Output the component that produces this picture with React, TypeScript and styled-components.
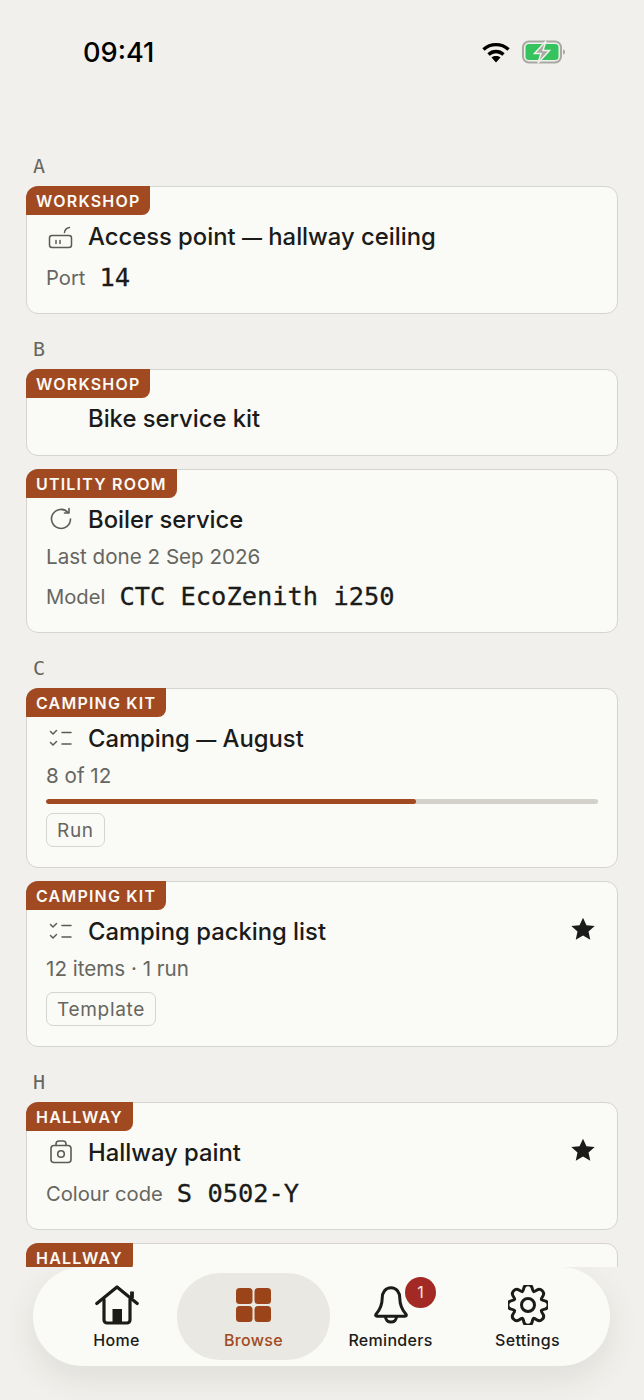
import { ReactNode } from "react";
import styled, { createGlobalStyle } from "styled-components";

const GlobalStyle = createGlobalStyle`
  html, body {
    margin: 0;
    padding: 0;
    background: #f1f0ec;
    font-family: Inter, "Noto Sans", sans-serif;
  }
`;

const Page = styled.div`
  width: 644px;
  height: 1400px;
  display: flex;
  flex-direction: column;
  overflow: hidden;
  background: #f1f0ec;
`;

const StatusBar = styled.div`
  height: 104px;
  flex: none;
  display: flex;
  align-items: center;
  justify-content: space-between;
  padding: 0 78px 0 83px;
  box-sizing: border-box;
`;

const Clock = styled.div`
  font-size: 27.2px;
  font-weight: 500;
  color: #000;
`;

const StatusIcons = styled.div`
  display: flex;
  align-items: center;
  gap: 12px;
`;

const Scroll = styled.div`
  flex: 1;
  min-height: 0;
  overflow: hidden;
  padding: 0 26px;
  display: flex;
  flex-direction: column;
`;

const SectionLetter = styled.div`
  font-family: "DejaVu Sans Mono", monospace;
  font-size: 20px;
  line-height: 24px;
  height: 24px;
  margin: 50px 0 8px 7px;
  color: #66665f;
  & ~ & {
    margin-top: 10px;
  }
`;

const Card = styled.div`
  position: relative;
  flex: none;
  box-sizing: border-box;
  background: #fafaf6;
  border: 1px solid #d5d4ce;
  border-radius: 12px;
  padding: 0 19px 16px;
  margin-bottom: 13px;
`;

const Tag = styled.div`
  width: fit-content;
  box-sizing: border-box;
  margin: -1px 0 0 -20px;
  height: 29px;
  line-height: 30px;
  padding: 0 10px;
  background: #a14a22;
  color: #fafaf6;
  font-size: 16px;
  font-weight: 600;
  letter-spacing: 1.2px;
  border-radius: 12px 0 8px 0;
`;

const TitleRow = styled.div`
  display: flex;
  align-items: center;
  height: 42px;
  &:last-child {
    height: 41px;
  }
`;

const IconSlot = styled.div`
  width: 40px;
  padding-left: 2px;
  flex: none;
  display: flex;
  align-items: center;
  color: #5c5c56;
`;

const Title = styled.div`
  flex: 1;
  font-size: 23.8px;
  font-weight: 550;
  color: #1b1b19;
  white-space: nowrap;
`;

const Dash = styled.span`
  font-size: 20px;
`;

const StarSlot = styled.div`
  display: flex;
  margin: 0 2px 4px 0;
`;

const Subtle = styled.div`
  font-size: 20.6px;
  line-height: 30px;
  color: #66665f;
  margin-top: 2px;
`;

const FieldRow = styled.div`
  display: flex;
  align-items: center;
  gap: 14px;
  height: 40px;
  ${Subtle} + & {
    margin-top: 4px;
  }
`;

const FieldLabel = styled.span`
  font-size: 20.2px;
  color: #66665f;
`;

const FieldValue = styled.span`
  font-family: "DejaVu Sans Mono", monospace;
  font-size: 25.4px;
  color: #1b1b19;
  -webkit-text-stroke: 0.3px #1b1b19;
`;

const Progress = styled.div`
  height: 5px;
  border-radius: 3px;
  background: #d3d2ca;
  margin: 8px 0 1px;
  overflow: hidden;
`;

const ProgressFill = styled.div`
  height: 100%;
  background: #a14a22;
  border-radius: 3px;
`;

const Chip = styled.div`
  width: fit-content;
  margin: 8px 0 4px;
  height: 32px;
  line-height: 33px;
  padding: 0 10px;
  font-size: 19px;
  letter-spacing: 0.7px;
  color: #66665f;
  border: 1px solid #d5d4ce;
  border-radius: 7px;
  ${Progress} + & {
    margin-top: 9px;
  }
`;

const TabArea = styled.div`
  flex: none;
  height: 133px;
  padding: 0 34px 34px 33px;
  box-sizing: border-box;
`;

const TabBar = styled.nav`
  height: 99px;
  box-sizing: border-box;
  border-radius: 50px;
  background: #fafaf6;
  box-shadow: 0 12px 32px rgba(60, 58, 50, 0.1);
  display: grid;
  grid-template-columns: repeat(4, 137px);
  padding: 0 15px;
`;

const Tab = styled.div<{ $active?: boolean }>`
  position: relative;
  display: flex;
  flex-direction: column;
  align-items: center;
  gap: 5px;
  margin: 6px ${({ $active }) => ($active ? "-8px" : "0")};
  padding-top: 12px;
  border-radius: 43px;
  background: ${({ $active }) => ($active ? "#e9e8e3" : "transparent")};
  color: ${({ $active }) => ($active ? "#a14a22" : "#1b1b19")};
`;

const TabIcon = styled.div`
  height: 40px;
  display: flex;
  align-items: center;
  justify-content: center;
`;

const TabLabel = styled.span`
  font-size: 16px;
  font-weight: 450;
  letter-spacing: 0.3px;
  line-height: 20px;
`;

const Badge = styled.span`
  position: absolute;
  top: 4px;
  left: 83px;
  width: 31px;
  height: 31px;
  border-radius: 50%;
  background: #a32a24;
  color: #fbe9e4;
  font-size: 16px;
  line-height: 30px;
  text-align: center;
`;

const StarIcon = () => (
  <svg width="26" height="26" viewBox="0 0 24 24" fill="#1b1b19">
    <path d="M12 1.500l3.200 7 7.600.8-5.700 5.100 1.600 7.500L12 18.100l-6.700 3.800 1.600-7.500L1.200 9.300l7.600-.8z" />
  </svg>
);

const RouterIcon = () => (
  <svg width="26" height="26" viewBox="0 0 26 26" fill="none" stroke="currentColor" strokeWidth="1.500" strokeLinecap="round">
    <rect x="1.500" y="12.500" width="22" height="12" rx="2.500" />
    <path d="M8 17.500v3M12 17.500v3" />
    <path d="M16.500 9.500c.3-3 2-4.500 5-5" />
  </svg>
);

const RefreshIcon = () => (
  <svg width="26" height="26" viewBox="0 0 26 26" fill="none" stroke="currentColor" strokeWidth="1.600" strokeLinecap="round" strokeLinejoin="round">
    <path d="M20 6.500A9.500 9.500 0 1 0 22.500 13" />
    <path d="M21 2.500v4.500h-4.500" />
  </svg>
);

const ChecklistIcon = () => (
  <svg width="26" height="26" viewBox="0 0 26 26" fill="none" stroke="currentColor" strokeWidth="1.500" strokeLinecap="round" strokeLinejoin="round">
    <path d="M2.500 6.500l2.500 2.500L8.500 5.500M2.500 17.500l2.500 2.500L8.500 16.500" />
    <path d="M14 7.500h9M14 19h9" />
  </svg>
);

const PaintIcon = () => (
  <svg width="26" height="26" viewBox="0 0 26 26" fill="none" stroke="currentColor" strokeWidth="1.600" strokeLinecap="round">
    <rect x="3" y="6.500" width="20" height="17" rx="3" />
    <path d="M8 6.500V5a3 3 0 0 1 3-3h4a3 3 0 0 1 3 3v1.500" />
    <circle cx="13" cy="15" r="3.300" />
  </svg>
);

const WifiIcon = () => (
  <svg width="28" height="22" viewBox="0 0 28 22" fill="none" stroke="#000" strokeWidth="3.400">
    <path d="M1.500 8.500c7-6.500 18-6.500 25 0" />
    <path d="M6.500 13.500c4.500-4 10.500-4 15 0" />
    <path d="M14 21.500l-4.500-5c2.700-1.900 6.300-1.900 9 0z" fill="#000" stroke="none" />
  </svg>
);

const BatteryIcon = () => (
  <svg width="44" height="24" viewBox="0 0 44 24">
    <rect x="1" y="1.500" width="38" height="21" rx="6" fill="none" stroke="#a9a9a3" strokeWidth="2" />
    <rect x="3.500" y="4" width="33" height="16" rx="3.500" fill="#34c35c" />
    <path d="M41 9.500c1.500.3 2 1.200 2 2.500s-.5 2.200-2 2.500z" fill="#a9a9a3" />
    <path d="M24 1L12.500 13.500h6.500L16 23l11.500-12.500H21z" fill="#a9a9a3" stroke="#f1f0ec" strokeWidth="1.500" />
  </svg>
);

const HomeIcon = () => (
  <svg width="44" height="40" viewBox="0 0 44 40" fill="none" stroke="#1b1b19" strokeWidth="3.200" strokeLinecap="round" strokeLinejoin="round">
    <path d="M1.800 18.500L22 2l20.200 16.500" />
    <path d="M9 14.500v20.500a3 3 0 0 0 3 3h20a3 3 0 0 0 3-3V14.500" />
    <path d="M37 13V6.500" strokeWidth="3.800" strokeLinecap="butt" />
    <rect x="17.500" y="24" width="9.500" height="14" fill="#1b1b19" stroke="none" />
  </svg>
);

const GridIcon = () => (
  <svg width="35" height="34" viewBox="0 0 35 34" fill="#9c4419">
    <rect width="16.500" height="16" rx="3.500" />
    <rect x="18.500" width="16.500" height="16" rx="3.500" />
    <rect y="18" width="16.500" height="16" rx="3.500" />
    <rect x="18.500" y="18" width="16.500" height="16" rx="3.500" />
  </svg>
);

const BellIcon = () => (
  <svg width="36" height="38" viewBox="0 0 36 38" fill="none" stroke="#1b1b19" strokeWidth="3" strokeLinecap="round" strokeLinejoin="round">
    <path d="M18 1.800c-5.500 0-8.800 4.500-8.800 10.500 0 7-2.200 11.500-6.200 16-.8 1-.3 2 1 2h28c1.300 0 1.800-1 1-2-4-4.500-6.200-9-6.200-16 0-6-3.300-10.500-8.800-10.500z" />
    <path d="M12.500 30.500c0 3.500 2.300 5.500 5.500 5.500s5.500-2 5.500-5.500" />
  </svg>
);

// eight rounded teeth, smoothed through the midpoints of the outline
const gearPath = (() => {
  const center = 20;
  const pts: [number, number][] = [];
  for (let i = 0; i < 8; i++) {
    const a = (i * Math.PI) / 4 - Math.PI / 2;
    const ring: [number, number][] = [
      [14.5, a - 0.34],
      [20.5, a - 0.17],
      [20.5, a + 0.17],
      [14.5, a + 0.34],
    ];
    ring.forEach(([r, t]) => pts.push([center + r * Math.cos(t), center + r * Math.sin(t)]));
  }
  const mid = (p: [number, number], q: [number, number]) => `${(p[0] + q[0]) / 2} ${(p[1] + q[1]) / 2}`;
  let d = `M${mid(pts[pts.length - 1], pts[0])}`;
  pts.forEach((p, i) => {
    d += `Q${p[0]} ${p[1]} ${mid(p, pts[(i + 1) % pts.length])}`;
  });
  return `${d}Z`;
})();

const GearIcon = () => (
  <svg width="40" height="40" viewBox="0 0 40 40" fill="none" stroke="#1b1b19" strokeWidth="3" strokeLinejoin="round">
    <path d={gearPath} />
    <circle cx="20" cy="20" r="6.500" />
  </svg>
);

type ItemProps = {
  tag: string;
  icon?: ReactNode;
  title: ReactNode;
  starred?: boolean;
  children?: ReactNode;
};

function Item({ tag, icon, title, starred, children }: ItemProps) {
  return (
    <Card>
      <Tag>{tag}</Tag>
      <TitleRow>
        <IconSlot>{icon}</IconSlot>
        <Title>{title}</Title>
        {starred && (
          <StarSlot>
            <StarIcon />
          </StarSlot>
        )}
      </TitleRow>
      {children}
    </Card>
  );
}

export default function App() {
  return (
    <Page>
      <GlobalStyle />
      <StatusBar>
        <Clock>09:41</Clock>
        <StatusIcons>
          <WifiIcon />
          <BatteryIcon />
        </StatusIcons>
      </StatusBar>
      <Scroll>
        <SectionLetter>A</SectionLetter>
        <Item
          tag="WORKSHOP"
          icon={<RouterIcon />}
          title={
            <>
              Access point <Dash>—</Dash> hallway ceiling
            </>
          }
        >
          <FieldRow>
            <FieldLabel>Port</FieldLabel>
            <FieldValue>14</FieldValue>
          </FieldRow>
        </Item>
        <SectionLetter>B</SectionLetter>
        <Item tag="WORKSHOP" title="Bike service kit" />
        <Item tag="UTILITY ROOM" icon={<RefreshIcon />} title="Boiler service">
          <Subtle>Last done 2 Sep 2026</Subtle>
          <FieldRow>
            <FieldLabel>Model</FieldLabel>
            <FieldValue>CTC EcoZenith i250</FieldValue>
          </FieldRow>
        </Item>
        <SectionLetter>C</SectionLetter>
        <Item
          tag="CAMPING KIT"
          icon={<ChecklistIcon />}
          title={
            <>
              Camping <Dash>—</Dash> August
            </>
          }
        >
          <Subtle>8 of 12</Subtle>
          <Progress>
            <ProgressFill style={{ width: "67%" }} />
          </Progress>
          <Chip>Run</Chip>
        </Item>
        <Item tag="CAMPING KIT" icon={<ChecklistIcon />} title="Camping packing list" starred>
          <Subtle>12 items · 1 run</Subtle>
          <Chip>Template</Chip>
        </Item>
        <SectionLetter>H</SectionLetter>
        <Item tag="HALLWAY" icon={<PaintIcon />} title="Hallway paint" starred>
          <FieldRow>
            <FieldLabel>Colour code</FieldLabel>
            <FieldValue>S 0502-Y</FieldValue>
          </FieldRow>
        </Item>
        <Item tag="HALLWAY" title="" />
      </Scroll>
      <TabArea>
        <TabBar>
          <Tab>
            <TabIcon>
              <HomeIcon />
            </TabIcon>
            <TabLabel>Home</TabLabel>
          </Tab>
          <Tab $active>
            <TabIcon>
              <GridIcon />
            </TabIcon>
            <TabLabel>Browse</TabLabel>
          </Tab>
          <Tab>
            <TabIcon>
              <BellIcon />
            </TabIcon>
            <TabLabel>Reminders</TabLabel>
            <Badge>1</Badge>
          </Tab>
          <Tab>
            <TabIcon>
              <GearIcon />
            </TabIcon>
            <TabLabel>Settings</TabLabel>
          </Tab>
        </TabBar>
      </TabArea>
    </Page>
  );
}
